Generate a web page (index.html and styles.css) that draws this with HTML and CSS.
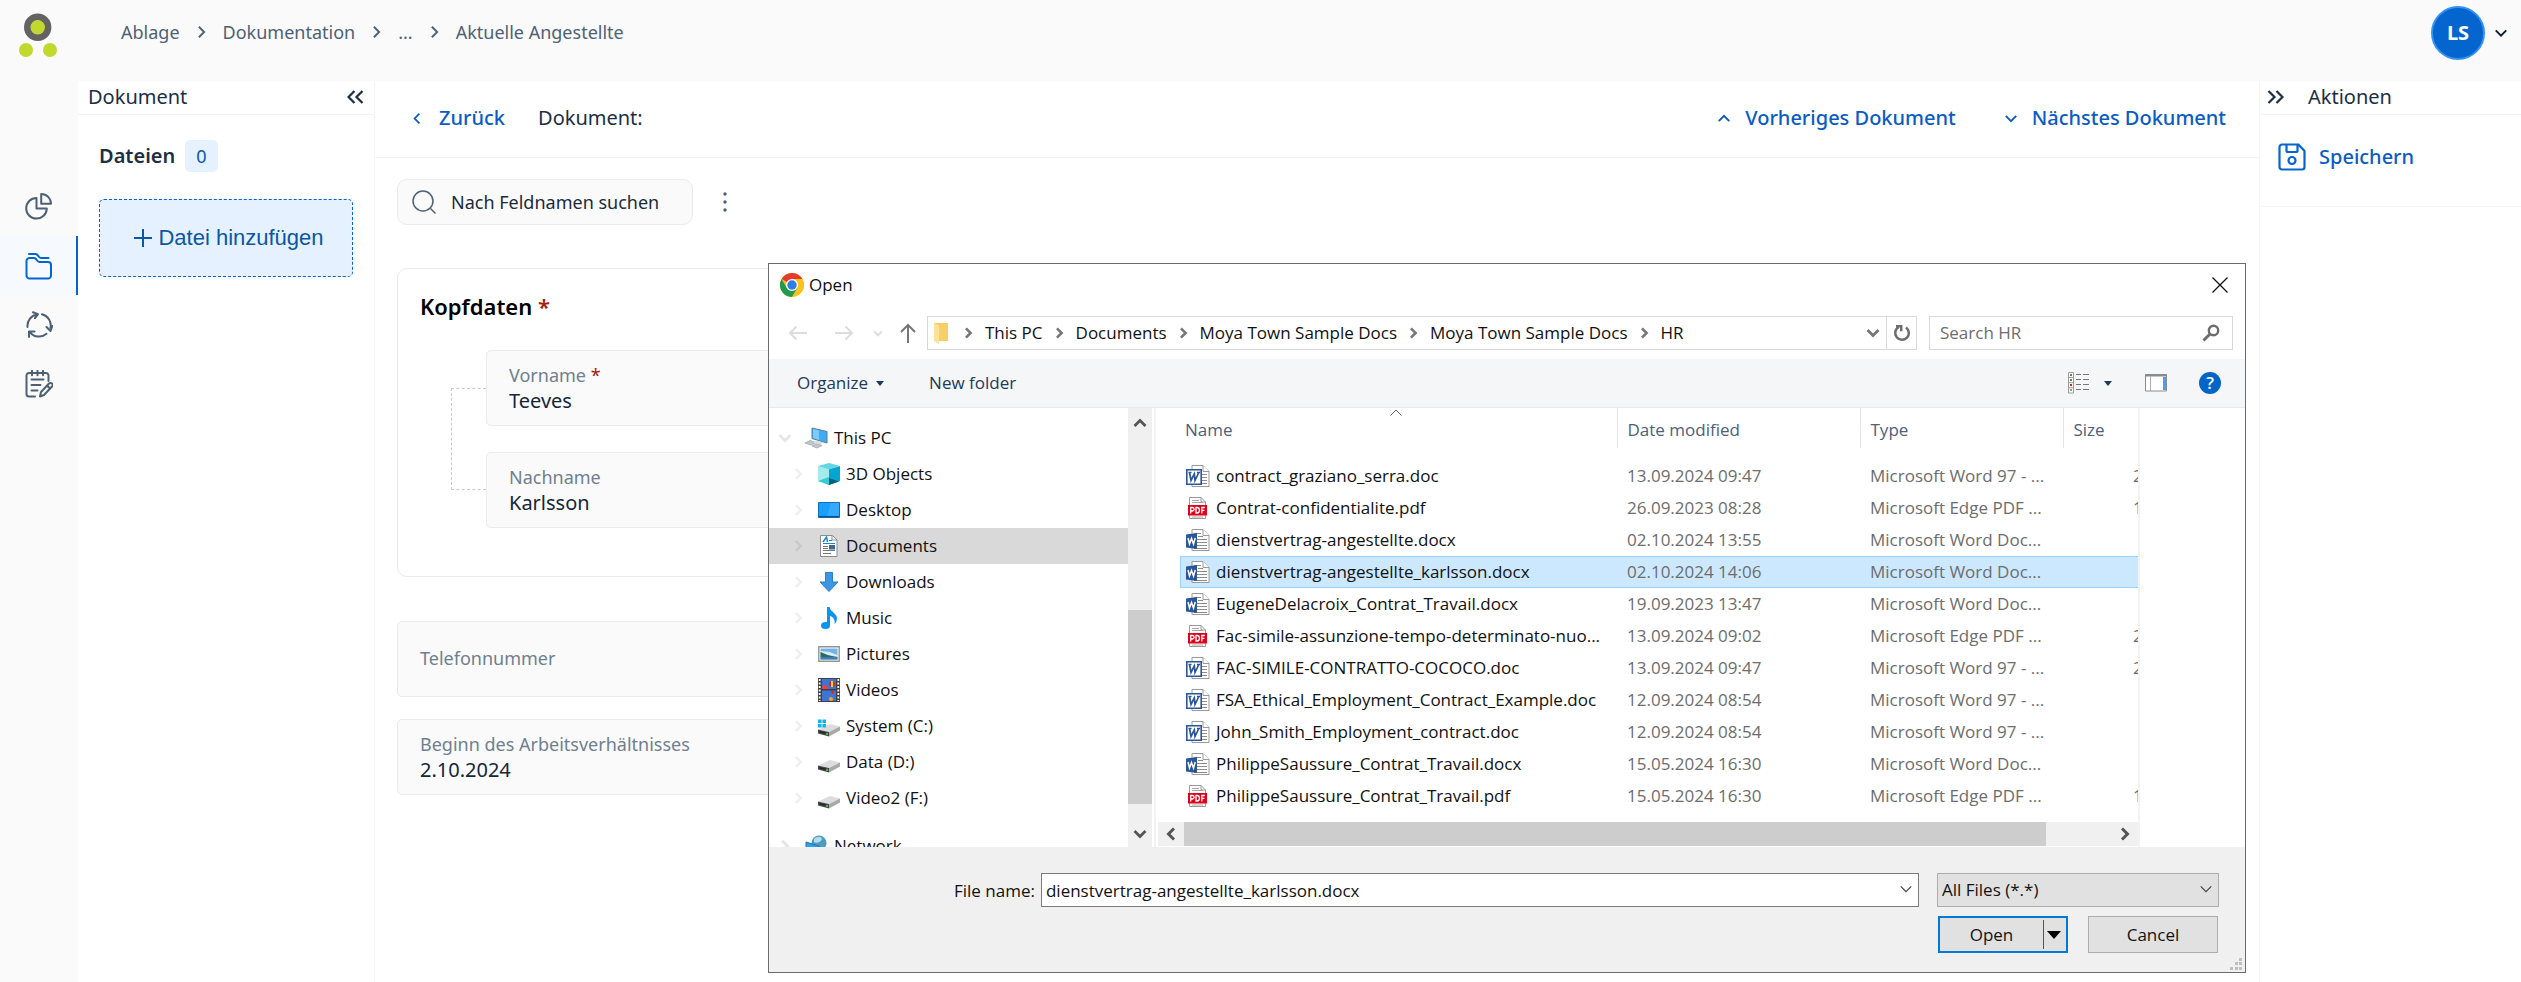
FILE: index.html
```html
<!DOCTYPE html>
<html lang="de">
<head>
<meta charset="utf-8">
<title>Ablage</title>
<link rel="stylesheet" href="styles.css">
</head>
<body>
<svg class="defs" aria-hidden="true">
  <symbol id="chev" viewBox="0 0 10 16"><path d="M2 2l6 6-6 6" fill="none" stroke="currentColor" stroke-width="2.2"/></symbol>
  <symbol id="down" viewBox="0 0 16 10"><path d="M2 2l6 6 6-6" fill="none" stroke="currentColor" stroke-width="2.2"/></symbol>
  <symbol id="thin-down" viewBox="0 0 16 10"><path d="M2 1.500l6 6 6-6" fill="none" stroke="currentColor" stroke-width="1.400"/></symbol>
  <symbol id="bold-chev" viewBox="0 0 10 14"><path d="M2 1.500L7.500 7 2 12.500" fill="none" stroke="currentColor" stroke-width="3"/></symbol>
  <symbol id="bold-down" viewBox="0 0 14 10"><path d="M1.500 2L7 7.500 12.500 2" fill="none" stroke="currentColor" stroke-width="2.800"/></symbol>
  <symbol id="doc" viewBox="0 0 24 22">
    <path d="M6 .5h11l6 6v15H6z" fill="#fff" stroke="#9a9a9a"/><path d="M17 .5v6h6" fill="#fff" stroke="#9a9a9a"/>
    <path d="M8 4.500h7M16 9.500h5M16 12.500h5M16 15.500h5M8 18.500h13" stroke="#8c8c8c"/>
    <path d="M.8 4.800h14.400v14.400H.8z" fill="#fff" stroke="#2b579a" stroke-width="1.600"/>
    <path d="M3.500 7.500l1.500 8L8.300 9l.7 6.500 3.800-8M2.500 7.500h3M11 7.500h3" fill="none" stroke="#2b579a" stroke-width="1.700"/>
  </symbol>
  <symbol id="docx" viewBox="0 0 24 22">
    <path d="M6 .5h11l6 6v15H6z" fill="#fff" stroke="#9a9a9a"/><path d="M17 .5v6h6" fill="#fff" stroke="#9a9a9a"/>
    <path d="M8 4.500h7M12 7.500h5M11 10.500h10M11 13.500h10M11 16.500h10M8 19.500h13" stroke="#8c8c8c"/>
    <path d="M0 5.500L11 4v16L0 18.500z" fill="#2b579a"/>
    <path d="M2 9l1.500 6L5.500 9.500 7.500 15 9.200 9" fill="none" stroke="#fff" stroke-width="1.500"/>
  </symbol>
  <symbol id="pdf" viewBox="0 0 24 22">
    <path d="M3.500.5h11.500l4.500 4.500v16.500H3.500z" fill="#fff" stroke="#9a9a9a"/><path d="M15 .5v4.500h4.500" fill="none" stroke="#9a9a9a"/>
    <path d="M6 3.500h7M6 5.500h11M6 20h11" stroke="#a5a5a5"/>
    <path d="M2 8h19v10.500H2z" fill="#e1001a"/>
    <path d="M4.700 16.500v-6h1.600a1.600 1.600 0 0 1 0 3.500H4.700M10 10.500v5.500h1a2.400 2.700 0 0 0 0-5.500zM15.800 16.500v-6h3M15.800 13.300h2.600" fill="none" stroke="#fff" stroke-width="1.300"/>
  </symbol>
  <symbol id="drive" viewBox="0 0 22 22">
    <path d="M0 14.500L12 9l10 2.500-11 5.500z" fill="#dcdcde"/><path d="M0 14.500l11 2.500v4.500L0 18.500z" fill="#4a4a4a"/><path d="M11 17l11-5.500v4L11 21.500z" fill="#a9a9ac"/><path d="M1.500 16l6 1.500V19l-6-1.500z" fill="#222"/><path d="M8 18h2v2H8z" fill="#37b34a"/>
  </symbol>
</svg>

<header class="topbar">
  <a href="#" class="logo" aria-label="Startseite">
    <svg width="38" height="48" viewBox="0 0 38 48"><circle cx="18.700" cy="18.300" r="10.200" fill="#fff" stroke="#636363" stroke-width="7"/><circle cx="18.700" cy="18.300" r="7.200" fill="#c1d82f"/><circle cx="7" cy="41" r="7" fill="#c1d82f"/><circle cx="31" cy="41" r="7" fill="#c1d82f"/></svg>
  </a>
  <nav class="crumbs" aria-label="Pfad">
    <a href="#">Ablage</a><svg width="9" height="14"><use href="#chev"/></svg>
    <a href="#">Dokumentation</a><svg width="9" height="14"><use href="#chev"/></svg>
    <a href="#">...</a><svg width="9" height="14"><use href="#chev"/></svg>
    <a href="#">Aktuelle Angestellte</a>
  </nav>
  <button class="account" aria-label="Konto"><span class="avatar">LS</span><svg width="14" height="10"><use href="#down"/></svg></button>
</header>

<div class="shell">
  <nav class="rail" aria-label="Bereiche">
    <a href="#" aria-label="Berichte"><svg width="28" height="28" viewBox="0 0 28 28"><path d="M11.500 5a10.300 10.300 0 1 0 10.300 10.600H11.500z"/><path d="M16.200 1v9.800H26C26 5.500 21.800 1 16.200 1z"/></svg></a>
    <a href="#" class="on" aria-label="Ablage"><svg width="28" height="28" viewBox="0 0 28 28"><path d="M1.500 9a3 3 0 0 1 3-3h4.500c3 0 2.500 4 5.500 4h8.500a3 3 0 0 1 3 3v10.500a3 3 0 0 1-3 3h-18.500a3 3 0 0 1-3-3z"/><path d="M4 2h6.500c3 0 2.500 4 5.500 4h7.500"/></svg></a>
    <a href="#" aria-label="Prozesse"><svg width="28" height="28" viewBox="0 0 28 28"><path d="M2.500 16A11.500 11.500 0 0 1 12 3.500M8 1.200l5 2-3 4M17 3.300a11.500 11.500 0 0 1 8.500 13.500M21.500 16l4 4 1.800-5M21.500 22.800a11.500 11.500 0 0 1-16.500-1.500M4 26v-5.500h5.500"/></svg></a>
    <a href="#" aria-label="Aufgaben"><svg width="28" height="28" viewBox="0 0 28 28"><path d="M10 26.500H4a2.500 2.500 0 0 1-2.500-2.500V5.500A2.500 2.500 0 0 1 4 3h17a2.500 2.500 0 0 1 2.500 2.500V11M7 .8v4.500M12.500.8v4.500M18 .8v4.500M6.500 9.500h12M6.500 15h9M6.500 20.500h6M15 26.500l1-4.500 8-8.500a2.100 2.100 0 0 1 3 3l-8 8.500zM22 15.500l3 3"/></svg></a>
  </nav>

  <aside class="files">
    <div class="side-head"><h2>Dokument</h2><button aria-label="Einklappen"><svg width="17" height="14" viewBox="0 0 17 14"><path d="M7.500 1l-6 6 6 6M15.500 1l-6 6 6 6"/></svg></button></div>
    <div class="files-body">
      <h3>Dateien <span class="badge">0</span></h3>
      <button class="add"><svg width="18" height="18" viewBox="0 0 18 18"><path d="M9 0v18M0 9h18"/></svg>Datei hinzufügen</button>
    </div>
  </aside>

  <main class="doc">
    <div class="doc-head">
      <a href="#" class="back"><svg width="8" height="13"><use href="#chev" transform="rotate(180 4 6.500)"/></svg>Zurück</a>
      <h1>Dokument:</h1>
      <a href="#" class="step prev"><svg width="14" height="9"><use href="#down" transform="rotate(180 7 4.500)"/></svg>Vorheriges Dokument</a>
      <a href="#" class="step"><svg width="14" height="9"><use href="#down"/></svg>Nächstes Dokument</a>
    </div>
    <div class="doc-body">
      <div class="find-row">
        <label class="find"><svg width="24" height="24" viewBox="0 0 24 24"><circle cx="11" cy="11" r="10"/><path d="M18.500 18.500l5 5"/></svg><input type="search" placeholder="Nach Feldnamen suchen" aria-label="Nach Feldnamen suchen"></label>
        <button class="kebab" aria-label="Mehr"><svg width="6" height="22" viewBox="0 0 6 22"><circle cx="3" cy="3" r="1.700"/><circle cx="3" cy="11" r="1.700"/><circle cx="3" cy="19" r="1.700"/></svg></button>
      </div>
      <section class="card">
        <h2>Kopfdaten <em>*</em></h2>
        <div class="nest">
          <div class="bracket"></div>
          <div class="field"><label for="vn">Vorname <em>*</em></label><input id="vn" value="Teeves"></div>
          <div class="field"><label for="nn">Nachname</label><input id="nn" value="Karlsson"></div>
        </div>
      </section>
      <div class="field single"><label for="tel">Telefonnummer</label><input id="tel"></div>
      <div class="field"><label for="beg">Beginn des Arbeitsverhältnisses</label><input id="beg" value="2.10.2024"></div>
    </div>
  </main>

  <aside class="actions">
    <div class="side-head"><button aria-label="Ausklappen"><svg width="17" height="14" viewBox="0 0 17 14"><path d="M1.500 1l6 6-6 6M9.500 1l6 6-6 6"/></svg></button><h2>Aktionen</h2></div>
    <button class="save"><svg width="28" height="28" viewBox="0 0 28 28"><path d="M4 1.500h16.500L26.500 8v16a2.500 2.500 0 0 1-2.500 2.500H4A2.500 2.500 0 0 1 1.500 24V4A2.500 2.500 0 0 1 4 1.500zM8.500 1.500v6a1.500 1.500 0 0 0 1.500 1.500h8a1.500 1.500 0 0 0 1.500-1.500v-6"/><circle cx="14" cy="17.500" r="3.500"/></svg>Speichern</button>
  </aside>
</div>

<div class="dialog" role="dialog" aria-label="Open" lang="en">
  <div class="titlebar">
    <svg width="24" height="24" viewBox="0 0 24 24"><circle cx="12" cy="12" r="12" fill="#fcc31e"/><path d="M12 12L1.600 6A12 12 0 0 1 22.400 6z" fill="#e33b2e"/><path d="M1.600 6A12 12 0 0 0 12 24l5.200-9-5.200-3-5.200 3z" fill="#219b4b"/><path d="M12 6h10.400a12 12 0 0 1 0 12L17 15z" fill="#fcc31e"/><circle cx="12" cy="12" r="6" fill="#fff"/><circle cx="12" cy="12" r="4.700" fill="#2f7de9"/></svg>
    <span>Open</span>
    <button aria-label="Close"><svg width="16" height="16" viewBox="0 0 16 16"><path d="M.5.5l15 15M15.500.5l-15 15" stroke="#111" stroke-width="1.300"/></svg></button>
  </div>

  <div class="navbar">
    <button class="dim" aria-label="Back"><svg width="20" height="16" viewBox="0 0 20 16"><path d="M19 8H2M8.500 1.500L2 8l6.500 6.500"/></svg></button>
    <button class="dim fwd" aria-label="Forward"><svg width="20" height="16" viewBox="0 0 20 16"><path d="M1 8h17M11.500 1.500L18 8l-6.500 6.500"/></svg></button>
    <button class="dim" aria-label="Recent"><svg width="10" height="7"><use href="#bold-down"/></svg></button>
    <button class="up" aria-label="Up"><svg width="16" height="20" viewBox="0 0 16 20"><path d="M8 20V2M1 9l7-7 7 7"/></svg></button>
    <div class="address">
      <svg width="15" height="22" viewBox="0 0 15 22"><path d="M0 1h14v18H0z" fill="#f7cf66"/><path d="M0 1l5 3v18l-5-3z" fill="#fde39a"/></svg>
      <svg class="sep" width="9" height="12"><use href="#bold-chev"/></svg><a href="#">This PC</a>
      <svg class="sep" width="9" height="12"><use href="#bold-chev"/></svg><a href="#">Documents</a>
      <svg class="sep" width="9" height="12"><use href="#bold-chev"/></svg><a href="#">Moya Town Sample Docs</a>
      <svg class="sep" width="9" height="12"><use href="#bold-chev"/></svg><a href="#">Moya Town Sample Docs</a>
      <svg class="sep" width="9" height="12"><use href="#bold-chev"/></svg><a href="#">HR</a>
      <button class="drop" aria-label="Previous locations"><svg width="14" height="10"><use href="#bold-down"/></svg></button>
      <button class="refresh" aria-label="Refresh"><svg width="18" height="18" viewBox="0 0 18 18"><path d="M13 3.500a6.800 6.800 0 1 1-7.500-.3M3 2.200h5.200v5" fill="none" stroke="#6d6d6d" stroke-width="2.500"/></svg></button>
    </div>
    <label class="lookup"><input type="search" placeholder="Search HR" aria-label="Search HR"><svg width="18" height="18" viewBox="0 0 18 18"><circle cx="11.500" cy="6.500" r="4.700" fill="none" stroke="#6d6d6d" stroke-width="2.400"/><path d="M8 10L1.500 16.500" stroke="#6d6d6d" stroke-width="3"/></svg></label>
  </div>

  <div class="tools">
    <button>Organize<svg width="8" height="5" viewBox="0 0 8 5"><path d="M0 0h8L4 5z" fill="#1e395b"/></svg></button>
    <button class="new">New folder</button>
    <button class="view" aria-label="Change view"><svg width="22" height="22" viewBox="0 0 22 22"><path d="M.5.5h5v20.500h-5zM.5 5.500h5M.5 10.700h5M.5 15.800h5" fill="#fff" stroke="#9a9a9a"/><path d="M8 2.500h5M15 2.500h6M8 7.500h5M15 7.500h6M8 12.500h5M15 12.500h6M8 17.500h5M15 17.500h6" stroke="#777"/><path d="M2 2h2v2H2z" fill="#3c78b4"/><path d="M2 7h2v2H2z" fill="#7b7b3a"/><path d="M2 12h2v2H2z" fill="#c22"/><path d="M2 17h2v2H2z" fill="#8a8"/></svg><svg width="8" height="5" viewBox="0 0 8 5"><path d="M0 0h8L4 5z" fill="#1e395b"/></svg></button>
    <button class="pane" aria-label="Preview pane"><svg width="22" height="18" viewBox="0 0 22 18"><path d="M.5.5h21v16.500H.5z" fill="#fff" stroke="#8a8a8a"/><path d="M0 0h22v2.500H0z" fill="#8a8a8a"/><path d="M5.500 2v15" stroke="#aaa"/><path d="M18 3h3v13h-3z" fill="#42a1f5"/></svg></button>
    <button class="help" aria-label="Help">?</button>
  </div>

  <div class="panes">
    <ul class="tree">
      <li class="root"><a href="#"><svg class="tw" width="14" height="10"><use href="#bold-down"/></svg><svg width="24" height="22" viewBox="0 0 24 22"><path d="M7 1l15 3.500V16L7 11.500z" fill="#3daef5" stroke="#5d7c92"/><path d="M8 2l6 1.500v9.500L8 11z" fill="#7ccbfb"/><path d="M0 16l5-2.500 6 2L6 18zM7 19l5-2.500 5 2-5 2.500z" fill="#bfc5ca" stroke="#98a0a6" stroke-width=".7"/><path d="M11 13.500l7 2-3 2-7-2z" fill="#d8dcdf"/></svg>This PC</a></li>
      <li><a href="#"><svg class="tw" width="9" height="14"><use href="#bold-chev"/></svg><svg width="22" height="22" viewBox="0 0 22 22"><path d="M0 3l11 3v16L0 18z" fill="#a4ecea"/><path d="M22 3L11 6v16l11-4z" fill="#05a5cf"/><path d="M0 3l11-3 11 3-11 3.500z" fill="#62d6e2"/><path d="M0 18l11-4v8z" fill="#35cbd6"/><path d="M11 15l10 3.500L11 22z" fill="#045f78"/></svg>3D Objects</a></li>
      <li><a href="#"><svg class="tw" width="9" height="14"><use href="#bold-chev"/></svg><svg width="22" height="22" viewBox="0 0 22 22"><path d="M.5 3.500h21v15H.5z" fill="#1a9fff" stroke="#0d6fb8"/><path d="M13 4h8v13h-5L9 17z" fill="#47b2ff" opacity=".6"/><path d="M1 17.500h20" stroke="#0b4f8a"/></svg>Desktop</a></li>
      <li class="sel"><a href="#"><svg class="tw" width="9" height="14"><use href="#bold-chev"/></svg><svg width="22" height="22" viewBox="0 0 22 22"><path d="M2.500.5h12l4.500 4.500v16.500H2.500z" fill="#fff" stroke="#8d8d8d"/><path d="M14 .5v4.500h5" fill="none" stroke="#8d8d8d"/><path d="M5 7l3.500-5 1 5" fill="none" stroke="#1a86d0" stroke-width="1.500"/><path d="M11 5.500h3M5 8.500h12" stroke="#1a86d0"/><path d="M5 11.500h5M5 13.500h5M5 15.500h12M5 18.500h8" stroke="#777"/><path d="M11 10h6v4.500h-6z" fill="#376d9e"/></svg>Documents</a></li>
      <li><a href="#"><svg class="tw" width="9" height="14"><use href="#bold-chev"/></svg><svg width="22" height="22" viewBox="0 0 22 22"><path d="M7.500 1.500h7v9.500H20l-9 9.500-9-9.500h5.500z" fill="#3b97e3" stroke="#2c7fca"/></svg>Downloads</a></li>
      <li><a href="#"><svg class="tw" width="9" height="14"><use href="#bold-chev"/></svg><svg width="22" height="22" viewBox="0 0 22 22"><ellipse cx="7.500" cy="18.500" rx="4.500" ry="3.500" fill="#0a93f0"/><path d="M9 0h2.500c1 5 7 6 7.500 11 0 3-1 5-2.500 6 .8-4-1-7-4.500-8v9.500H9z" fill="#0a93f0"/></svg>Music</a></li>
      <li><a href="#"><svg class="tw" width="9" height="14"><use href="#bold-chev"/></svg><svg width="22" height="22" viewBox="0 0 22 22"><path d="M.8 3.800h20.400v14.400H.8z" fill="#fff" stroke="#949494" stroke-width="1.400"/><path d="M2.500 5.500h17v11h-17z" fill="#70b4ea"/><path d="M2.500 8l9 1 8 3v2l-17-1z" fill="#d7ecf7"/><path d="M2.500 9c5 2 9 4 17 5H2.500z" fill="#2b6f52"/><path d="M2.500 14h17v2.500h-17z" fill="#3c7fb4"/></svg>Pictures</a></li>
      <li><a href="#"><svg class="tw" width="9" height="14"><use href="#bold-chev"/></svg><svg width="22" height="24" viewBox="0 0 22 24"><path d="M0 0h22v24H0z" fill="#3f3f3f"/><path d="M1.700 1v22M20.300 1v22" stroke="#fff" stroke-width="1.800" stroke-dasharray="2 1.500"/><path d="M4 1h14v10H4zM4 12.500h14V23H4z" fill="#3f74d3"/><path d="M4 8l4-1 3 4H4z" fill="#d8474f"/><circle cx="14" cy="6" r="3" fill="#d5281f"/><path d="M13 3h2v6h-2z" fill="#ffd42a"/><path d="M13 13h3l-1 3h-1z" fill="#d5281f"/><circle cx="13" cy="21" r="2" fill="#f2a51f"/></svg>Videos</a></li>
      <li><a href="#"><svg class="tw" width="9" height="14"><use href="#bold-chev"/></svg><svg width="22" height="22" viewBox="0 0 22 22"><use href="#drive"/><path d="M0 4.500h3.600v3.600H0zM4.400 4.500H8v3.600H4.400zM0 9h3.600v3.600H0zM4.400 9H8v3.600H4.400z" fill="#0fb5f0"/></svg>System (C:)</a></li>
      <li><a href="#"><svg class="tw" width="9" height="14"><use href="#bold-chev"/></svg><svg width="22" height="22"><use href="#drive"/></svg>Data (D:)</a></li>
      <li><a href="#"><svg class="tw" width="9" height="14"><use href="#bold-chev"/></svg><svg width="22" height="22"><use href="#drive"/></svg>Video2 (F:)</a></li>
      <li class="root net"><a href="#"><svg class="tw" width="14" height="14"><use href="#bold-chev"/></svg><svg width="24" height="22" viewBox="0 0 24 22"><circle cx="14" cy="8" r="7.500" fill="#4d9cc4"/><path d="M9 4c3-3 7-3 8 0-1 3-6 5-8 3z" fill="#b5dcea"/><path d="M1 7l13 4v10L1 17z" fill="#2ba0ee" stroke="#2b6f9e"/></svg>Network</a></li>
    </ul>
    <div class="vscroll" aria-hidden="true"><svg width="14" height="10"><use href="#bold-down" transform="rotate(180 7 5)"/></svg><i></i><svg width="14" height="10"><use href="#bold-down"/></svg></div>
    <div class="list">
      <table>
        <colgroup><col class="c1"><col class="c2"><col class="c3"><col class="c4"></colgroup>
        <thead><tr><th>Name<svg class="sort" width="12" height="7" viewBox="0 0 12 7"><path d="M.5 6.500L6 1l5.500 5.500" fill="none" stroke="#666"/></svg></th><th>Date modified</th><th>Type</th><th>Size</th></tr></thead>
        <tbody>
          <tr><td><svg><use href="#doc"/></svg>contract_graziano_serra.doc</td><td>13.09.2024 09:47</td><td>Microsoft Word 97 - ...</td><td>2</td></tr>
          <tr><td><svg><use href="#pdf"/></svg>Contrat-confidentialite.pdf</td><td>26.09.2023 08:28</td><td>Microsoft Edge PDF ...</td><td>1</td></tr>
          <tr><td><svg><use href="#docx"/></svg>dienstvertrag-angestellte.docx</td><td>02.10.2024 13:55</td><td>Microsoft Word Doc...</td><td></td></tr>
          <tr class="sel"><td><svg><use href="#docx"/></svg>dienstvertrag-angestellte_karlsson.docx</td><td>02.10.2024 14:06</td><td>Microsoft Word Doc...</td><td></td></tr>
          <tr><td><svg><use href="#docx"/></svg>EugeneDelacroix_Contrat_Travail.docx</td><td>19.09.2023 13:47</td><td>Microsoft Word Doc...</td><td></td></tr>
          <tr><td><svg><use href="#pdf"/></svg>Fac-simile-assunzione-tempo-determinato-nuo...</td><td>13.09.2024 09:02</td><td>Microsoft Edge PDF ...</td><td>2</td></tr>
          <tr><td><svg><use href="#doc"/></svg>FAC-SIMILE-CONTRATTO-COCOCO.doc</td><td>13.09.2024 09:47</td><td>Microsoft Word 97 - ...</td><td>2</td></tr>
          <tr><td><svg><use href="#doc"/></svg>FSA_Ethical_Employment_Contract_Example.doc</td><td>12.09.2024 08:54</td><td>Microsoft Word 97 - ...</td><td></td></tr>
          <tr><td><svg><use href="#doc"/></svg>John_Smith_Employment_contract.doc</td><td>12.09.2024 08:54</td><td>Microsoft Word 97 - ...</td><td></td></tr>
          <tr><td><svg><use href="#docx"/></svg>PhilippeSaussure_Contrat_Travail.docx</td><td>15.05.2024 16:30</td><td>Microsoft Word Doc...</td><td></td></tr>
          <tr><td><svg><use href="#pdf"/></svg>PhilippeSaussure_Contrat_Travail.pdf</td><td>15.05.2024 16:30</td><td>Microsoft Edge PDF ...</td><td>1</td></tr>
        </tbody>
      </table>
      <div class="hscroll" aria-hidden="true"><svg width="10" height="14"><use href="#bold-chev" transform="rotate(180 5 7)"/></svg><i></i><svg width="10" height="14"><use href="#bold-chev"/></svg></div>
    </div>
    <div class="preview"></div>
  </div>

  <div class="footer">
    <label for="fn">File name:</label>
    <div class="combo"><input id="fn" value="dienstvertrag-angestellte_karlsson.docx"><svg width="14" height="9"><use href="#thin-down"/></svg></div>
    <div class="choices">
      <div class="combo grey"><select aria-label="File type"><option>All Files (*.*)</option></select><svg width="14" height="9"><use href="#thin-down"/></svg></div>
      <div class="buttons">
        <div class="split"><button>Open</button><button class="more" aria-label="Open options"><svg width="14" height="8" viewBox="0 0 14 8"><path d="M0 0h14L7 8z"/></svg></button></div>
        <button class="cancel">Cancel</button>
      </div>
    </div>
    <svg class="grip" width="12" height="12" viewBox="0 0 12 12"><path d="M9 0h3v3H9zM5 4h3v3H5zM9 4h3v3H9zM0 9h3v3H0zM5 9h3v3H5zM9 9h3v3H9z" fill="#bfbfbf"/></svg>
  </div>
</div>
</body>
</html>
```

FILE: styles.css
```css
* { box-sizing: border-box; }
body {
  margin: 0;
  min-height: 100vh;
  display: flex;
  flex-direction: column;
  position: relative;
  background: #fff;
  font: 18px/24px "Noto Sans", sans-serif;
  color: #1b2f45;
}
a { color: inherit; text-decoration: none; }
button, input, select { font: inherit; color: inherit; border: 0; background: none; padding: 0; margin: 0; outline: 0; }
h1, h2, h3, ul { margin: 0; padding: 0; }
h1, h2 { font-size: 20px; font-weight: 400; }
em { font-style: normal; color: #a3200d; }
svg { display: block; flex: none; }
.defs { position: absolute; width: 0; height: 0; }

.topbar { display: flex; align-items: center; padding: 6px 13px 21px 19px; background: #fafafa; }
.logo { width: 102px; }
.crumbs { display: flex; align-items: center; gap: 17px; color: #4d6175; margin-bottom: 2px; }
.account { margin-left: auto; display: flex; align-items: center; gap: 9px; color: #0b1f33; }
.avatar { width: 54px; height: 54px; border: 2px solid #3392f5; border-radius: 50%; background: #0465cf; color: #fff; font-weight: 700; font-size: 20px; line-height: 50px; }

.shell { flex: 1; display: flex; }
.rail { width: 78px; background: #fafafa; padding-top: 96px; }
.rail a { height: 59px; display: flex; align-items: center; justify-content: center; border: solid transparent; border-width: 0 2px; }
.rail svg { fill: none; stroke: #4d6175; stroke-width: 2; stroke-linejoin: round; stroke-linecap: round; }
.rail .on { background: #f6faff; border-right-color: #0465cf; }
.rail .on svg { stroke: #0465cf; }

.side-head { display: flex; align-items: center; height: 34px; border-bottom: 1px solid #f4f4f4; }
.side-head svg { fill: none; stroke: #1b2f45; stroke-width: 2.2; }
.files { width: 297px; border-right: 1px solid #f4f4f4; }
.files .side-head { padding: 0 10px 2px; justify-content: space-between; }
.files-body { padding: 25px 21px 0; }
h3 { display: flex; align-items: center; gap: 10px; font-size: 20px; font-weight: 600; }
.badge { padding: 4px 11px; border-radius: 5px; background: #e5f1ff; color: #0a57a5; font-size: 18px; font-weight: 400; }
.add { width: 100%; margin-top: 27px; padding: 25px 0 25px 6px; display: flex; align-items: center; justify-content: center; gap: 6px; border: 1px dashed #0465cf; border-radius: 5px; background: #e5f1ff; color: #0a57a5; font: 22px/26px "Liberation Sans", sans-serif; }
.add svg { stroke: #0a57a5; stroke-width: 2; }

.doc { flex: 1; }
.doc-head { display: flex; align-items: center; height: 77px; padding: 0 33px 2px 38px; border-bottom: 1px solid #f4f4f4; font-size: 20px; }
.doc-head a { display: flex; align-items: center; color: #0a5cc4; font-weight: 500; }
.back { gap: 18px; margin-right: 33px; }
.step { gap: 14px; }
.prev { margin-left: auto; margin-right: 48px; }
.doc-body { padding: 21px 22px; }
.find-row { display: flex; align-items: center; gap: 29px; margin-bottom: 43px; }
.find { width: 296px; height: 46px; display: flex; align-items: center; gap: 15px; padding: 0 14px; border: 1px solid #ebebeb; border-radius: 10px; background: #fafafa; }
.find svg { fill: none; stroke: #4d6175; stroke-width: 1.5; }
.find input { width: 100%; min-width: 0; }
.find input::placeholder { color: #1b2b3a; opacity: 1; }
.kebab svg { fill: #4d6175; }
.card { border: 1px solid #ebebeb; border-radius: 10px; padding: 22px 22px 48px; margin-bottom: 44px; }
.card h2 { font-size: 22px; line-height: 30px; font-weight: 600; color: #000; }
.nest { display: grid; grid-template-columns: 35px 1fr; row-gap: 26px; margin: 29px 0 0 31px; }
.bracket { grid-row: 1 / 3; margin: 38px 0; border: 1px dashed #c9c9c9; border-right: 0; }
.nest .field { grid-column: 2; margin: 0; }
.field { padding: 12px 22px; border: 1px solid #ebebeb; border-radius: 5px; background: #fafafa; margin-bottom: 22px; }
.field label { display: block; color: #6f7f90; line-height: 25px; }
.field input { display: block; width: 100%; font-size: 20px; line-height: 25px; height: 25px; color: #14263a; }
.single { padding: 24px 22px; }
.single input { height: 1px; }

.actions { width: 262px; border-left: 1px solid #f4f4f4; }
.actions .side-head { gap: 24px; padding: 0 7px 2px; }
.save { width: 100%; display: flex; align-items: center; gap: 13px; padding: 28px 18px 35px; border-bottom: 1px solid #f4f4f4; color: #0a5cc4; font-size: 20px; font-weight: 500; }
.save svg { fill: none; stroke: #0465cf; stroke-width: 2.2; }

.dialog { position: absolute; left: 768px; right: 275px; top: 263px; background: #fff; border: 1px solid #6b6b6b; font: 17px/24px "Open Sans", sans-serif; color: #111; }
.titlebar { display: flex; align-items: center; gap: 5px; padding: 9px 17px 9px 11px; }
.titlebar button { margin-left: auto; }
.navbar { display: flex; align-items: center; padding: 10px 12px 9px 19px; }
.navbar button svg { fill: none; stroke: currentColor; stroke-width: 2; }
.navbar .dim { color: #dcdcdc; }
.navbar .fwd { margin: 0 19px 0 26px; }
.navbar .up { margin: 0 11px 0 17px; color: #777; }
.address { flex: 1; height: 34px; display: flex; align-items: center; gap: 12px; padding-left: 6px; border: 1px solid #d9d9d9; }
.sep { color: #777; }
.address .sep:nth-child(2) { margin-left: 3px; }
.drop { margin-left: auto; color: #777; }
.refresh { align-self: stretch; width: 30px; margin-left: -6px; display: flex; align-items: center; justify-content: center; border-left: 1px solid #d9d9d9; }
.lookup { width: 304px; height: 34px; margin-left: 12px; display: flex; align-items: center; padding: 0 12px 0 10px; border: 1px solid #d9d9d9; }
.lookup input { flex: 1; min-width: 0; }
.lookup input::placeholder { color: #6d6d6d; opacity: 1; }

.tools { display: flex; align-items: center; height: 49px; padding: 0 24px 0 28px; background: #f5f6f7; border-bottom: 1px solid #e8e9ec; color: #1e395b; }
.tools button { display: flex; align-items: center; gap: 8px; }
.tools .new { margin-left: 45px; }
.tools .view { margin-left: auto; gap: 14px; }
.tools .pane { margin: 0 32px 0 33px; }
.tools .help { width: 22px; height: 22px; justify-content: center; border-radius: 50%; background: #0465c8; color: #fff; font-weight: 600; }

.panes { display: flex; height: 439px; }
.tree { width: 359px; padding-top: 12px; list-style: none; overflow: hidden; }
.tree li { padding-left: 25px; }
.tree .root { padding-left: 9px; }
.tree .net { margin-top: 12px; }
.tree a { display: flex; align-items: center; gap: 6px; height: 36px; }
.tree .tw { color: #f0f0f0; margin-right: 9px; }
.tree .root .tw { color: #e6e6e6; margin-right: 8px; }
.tree .sel { background: #d9d9d9; }
.tree .sel .tw { color: #cacaca; }
.tree .root a { gap: 5px; }
.vscroll { width: 24px; display: flex; flex-direction: column; align-items: center; padding: 10px 0 8px; background: #f0f0f0; color: #555; }
.vscroll i { width: 24px; height: 194px; background: #cdcdcd; margin: auto 0 25px; }
.list { flex: 1; min-width: 0; margin-left: 2px; padding-bottom: 1px; border-left: 2px solid #f3f3f3; border-right: 2px solid #f3f3f3; overflow: hidden; display: flex; flex-direction: column; justify-content: space-between; }
table { width: 100%; margin-left: 24px; table-layout: fixed; border-collapse: collapse; }
.c1 { width: 437px; }
.c2 { width: 243px; }
.c3 { width: 203px; }
th, td { padding: 0 0 0 10px; text-align: left; font-weight: 400; white-space: nowrap; overflow: hidden; }
th { height: 40px; color: #4c607a; border-right: 1px solid #e5e5e5; position: relative; padding-top: 4px; }
th:first-child { padding-left: 5px; }
th:last-child { border: 0; }
.sort { position: absolute; left: 210px; top: 1px; }
tbody::before { content: ""; display: block; height: 12px; }
td { height: 32px; color: #6d6d6d; }
td:first-child { display: flex; align-items: center; gap: 6px; padding-left: 6px; color: #111; }
td:last-child { padding-left: 70px; }
td svg { width: 24px; height: 22px; }
tr.sel { background: #cce8ff; box-shadow: inset 0 0 0 1px #99d1ff; }
.hscroll { height: 24px; margin-left: 2px; display: flex; align-items: center; padding: 0 8px; background: #f0f0f0; color: #555; }
.hscroll i { flex: 1; height: 24px; margin: 0 74px 0 8px; background: #cdcdcd; }
.preview { width: 105px; }

.footer { position: relative; display: flex; gap: 6px; padding: 26px 26px 19px 185px; background: #f0f0f0; }
.footer > label { line-height: 36px; }
.combo { position: relative; flex: 1; }
.combo input, .combo select { display: block; width: 100%; height: 34px; padding: 0 24px 0 4px; border: 1px solid #7a7a7a; background: #fff; appearance: none; }
.combo svg { position: absolute; right: 6px; top: 12px; color: #444; }
.combo.grey select { border-color: #adadad; background: #e1e1e1; }
.choices { width: 282px; margin-left: 12px; }
.buttons { display: flex; justify-content: space-between; padding: 9px 1px 0; }
.split, .cancel { width: 130px; height: 37px; border: 1px solid #adadad; background: #e1e1e1; }
.split { display: flex; border: 2px solid #0078d7; }
.split button { flex: 1; }
.split .more { flex: none; width: 23px; margin: 2px 0; padding-left: 3px; border-left: 1px solid #555; }
.grip { position: absolute; right: 3px; bottom: 2px; }
```
